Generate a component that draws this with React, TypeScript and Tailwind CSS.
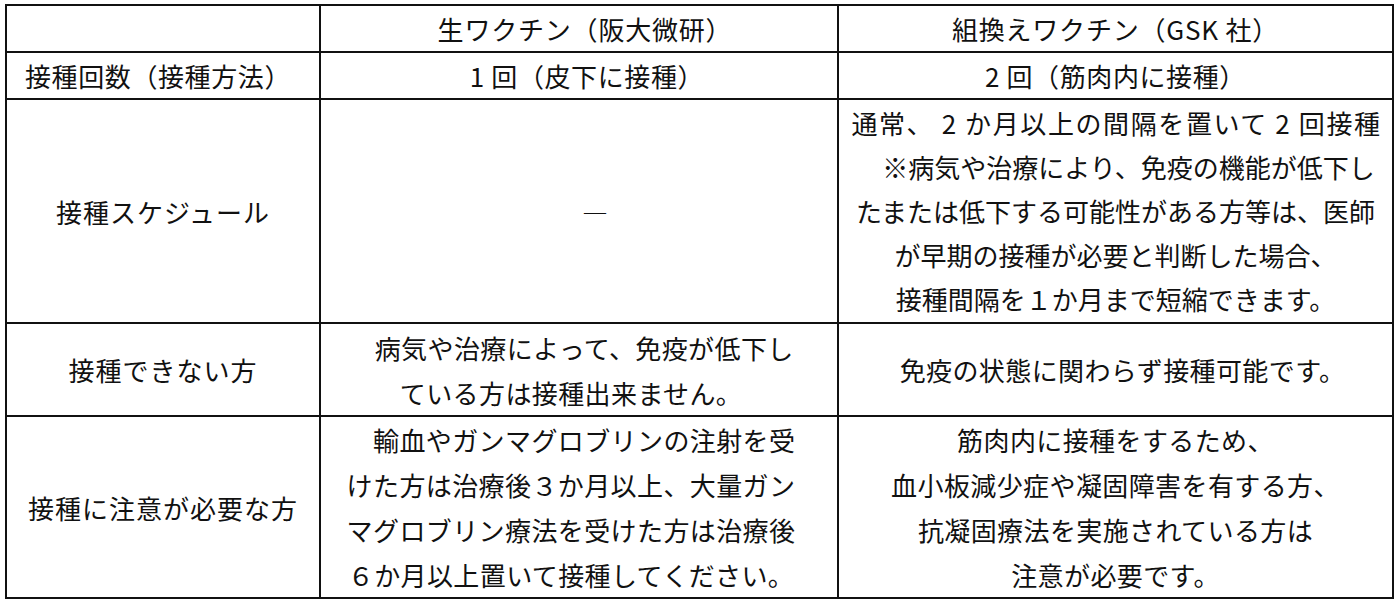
const font = { fontFamily: '"Noto Sans CJK JP", "Noto Sans", sans-serif' };

type Line = string | { text: string; className: string };

const Cell = ({ lines, className = '', leading = 'leading-[45px]' }: { lines: Line[]; className?: string; leading?: string }) => (
  <div className={`bg-white flex flex-col items-center justify-center text-center text-[26px] text-[#111] ${leading} ${className}`}>
    {lines.map((l, i) =>
      typeof l === 'string' ? (
        <div key={i} className="whitespace-pre">
          {l}
        </div>
      ) : (
        <div key={i} className={`whitespace-pre ${l.className}`}>
          {l.text}
        </div>
      ),
    )}
  </div>
);

export default function App() {
  return (
    <div className="w-[1398px] h-[603px] bg-white pt-[4px] pl-[5px]" style={font}>
      <div className="grid w-fit grid-cols-[312px_516px_553px] grid-rows-[45px_45px_222px_91px_180px] gap-[2px] bg-[#111] p-[2px]">
        {/* header */}
        <Cell lines={['']} />
        <Cell lines={['生ワクチン（阪大微研）']} className="pl-[12px] tracking-[0.8px]" />
        <Cell lines={['組換えワクチン（GSK 社）']} className="tracking-[0.8px]" />

        <Cell lines={['接種回数（接種方法）']} className="pr-[10px] tracking-[0.6px]" />
        <Cell lines={['1 回（皮下に接種）']} className="pl-[16px] tracking-[0.6px]" />
        <Cell lines={['2 回（筋肉内に接種）']} className="tracking-[0.6px]" />

        <Cell lines={['接種スケジュール']} className="tracking-[1px]" />
        <Cell lines={['―']} className="pl-[32px]" />
        <Cell
          leading="leading-[44px]"
          lines={[
            { text: '通常、 2 か月以上の間隔を置いて 2 回接種', className: 'tracking-[1.6px] pl-[2px]' },
            '　※病気や治療により、免疫の機能が低下し',
            'たまたは低下する可能性がある方等は、医師',
            'が早期の接種が必要と判断した場合、',
            '接種間隔を１か月まで短縮できます。',
          ]}
        />

        <Cell lines={['接種できない方']} className="tracking-[1px]" />
        <Cell lines={['　病気や治療によって、免疫が低下し', 'ている方は接種出来ません。']} className="pr-[16px] tracking-[0.4px]" />
        <Cell lines={['免疫の状態に関わらず接種可能です。']} className="pl-[14px] tracking-[0.4px]" />

        <Cell lines={['接種に注意が必要な方']} className="tracking-[1px]" />
        <Cell
          className="pr-[16px] tracking-[0.4px]"
          lines={[
            '　輸血やガンマグロブリンの注射を受',
            'けた方は治療後３か月以上、大量ガン',
            'マグロブリン療法を受けた方は治療後',
            '６か月以上置いて接種してください。',
          ]}
        />
        <Cell
          className="tracking-[0.4px]"
          lines={[
            '筋肉内に接種をするため、',
            '血小板減少症や凝固障害を有する方、',
            '抗凝固療法を実施されている方は',
            '注意が必要です。',
          ]}
        />
      </div>
    </div>
  );
}
